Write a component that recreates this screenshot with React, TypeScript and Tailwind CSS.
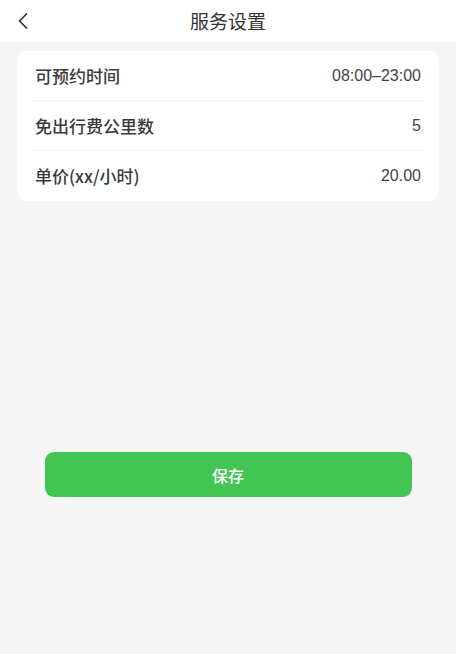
import { ChevronLeft } from "lucide-react";

const rows = [
  { label: "可预约时间", value: "08:00–23:00" },
  { label: "免出行费公里数", value: "5" },
  { label: "单价(xx/小时)", value: "20.00" },
];

export default function App() {
  return (
    <div
      className="flex h-[654px] w-[456px] flex-col bg-[#f5f5f5] text-[#222]"
      style={{ fontFamily: '"Noto Sans CJK SC", "Noto Sans", sans-serif' }}
    >
      {/* header */}
      <div className="relative flex h-[42px] items-center justify-center bg-white">
        <button className="absolute left-[9px] top-[7px] text-[#333]">
          <ChevronLeft size={28} strokeWidth={1.5} />
        </button>
        <span className="text-[19px] text-[#333]">服务设置</span>
      </div>

      {/* settings card */}
      <div className="mx-[17px] mt-[9px] rounded-[10px] bg-white px-[17px]">
        {rows.map((r, i) => (
          <div
            key={r.label}
            className={`flex h-[50px] items-center justify-between pl-[1px] pr-[1px] ${
              i < rows.length - 1 ? "border-b border-[#f2f2f2]" : ""
            }`}
          >
            <span className="text-[17px] font-medium text-[#3a3a3a]">{r.label}</span>
            <span
              className="text-[16px] text-[#444]"
              style={{ fontFamily: '"Liberation Sans", Arial, sans-serif' }}
            >
              {r.value}
            </span>
          </div>
        ))}
      </div>

      {/* save button */}
      <div className="mt-[251px] flex justify-center">
        <button className="h-[45px] w-[367px] rounded-[9px] bg-[#42c553] text-[16px] font-medium text-white">
          保存
        </button>
      </div>
    </div>
  );
}
